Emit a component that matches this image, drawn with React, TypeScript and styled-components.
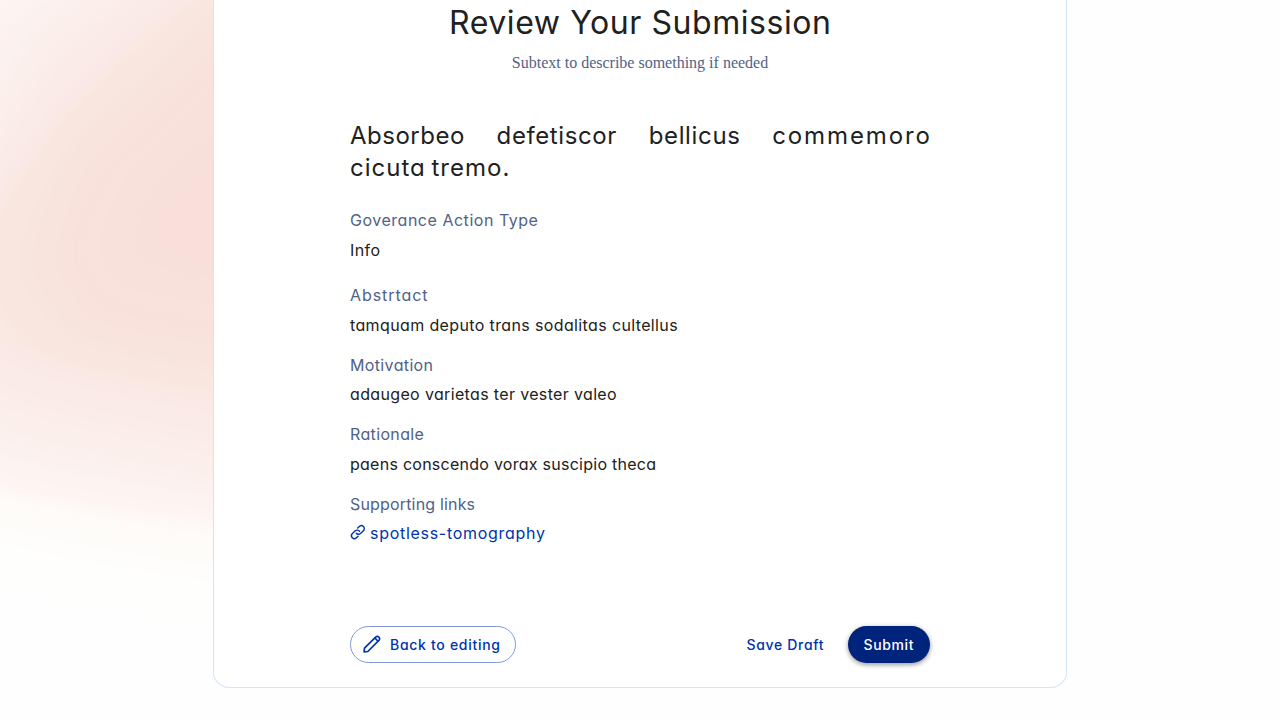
import React from "react";
import styled, { createGlobalStyle } from "styled-components";

const GlobalStyle = createGlobalStyle`
  *, *::before, *::after { box-sizing: border-box; }
  body { margin: 0; background: #fff; }
`;

const sans = `Inter, "Open Sans", sans-serif`;

const Page = styled.main`
  position: relative;
  height: 720px;
  overflow: hidden;
  display: flex;
  justify-content: center;
  align-items: flex-start;
  background: #fefefe;
  font-family: ${sans};
  font-feature-settings: "cv11";
`;

const Glow = styled.svg`
  position: absolute;
  left: 0;
  top: 0;
`;

const Card = styled.section`
  position: relative;
  width: 854px;
  height: 688px;
  padding: 0 136px;
  display: flex;
  flex-direction: column;
  background: #fff;
  border: 1px solid #d6e2ff;
  border-top: 0;
  border-radius: 0 0 16px 16px;
`;

const Spaced = styled.span<{ $ls: number }>`
  letter-spacing: ${(p) => p.$ls}px;
  margin-right: ${(p) => -p.$ls}px;
`;

const Title = styled.h1`
  margin: 0;
  padding-top: 1px;
  font-size: 32px;
  font-weight: 400;
  line-height: 44px;
  text-align: center;
  color: #212121;
`;

const Subtitle = styled.p`
  margin: 6px 0 0;
  font-family: "Liberation Serif", serif;
  font-size: 16px;
  line-height: 24px;
  text-align: center;
  color: #506288;
`;

const Heading = styled.h2`
  margin: 45px 0 0;
  font-size: 24px;
  font-weight: 400;
  line-height: 32px;
  text-align: justify;
  color: #212121;
`;

const Fields = styled.dl`
  margin: 24px 0 0;
  display: flex;
  flex-direction: column;
  gap: 16px;
`;

const Field = styled.div<{ $after?: number }>`
  display: flex;
  flex-direction: column;
  gap: 5.5px;
  margin-bottom: ${(p) => p.$after ?? 0}px;
  font-size: 16px;
  line-height: 24px;
`;

const Label = styled.dt`
  color: #506288;
`;

const Value = styled.dd`
  margin: 0;
  color: #212121;
`;

const Link = styled.a`
  display: flex;
  align-items: center;
  gap: 4px;
  color: #0033ad;
  svg { margin-top: -3px; }
`;

const Actions = styled.footer`
  display: flex;
  align-items: center;
  margin-top: auto;
  margin-bottom: 24px;
`;

const Button = styled.button<{ $kind: "outlined" | "text" | "contained" }>`
  display: flex;
  align-items: center;
  justify-content: center;
  height: 37px;
  padding: ${(p) => (p.$kind === "outlined" ? "0 3px 1px 0" : "0 1px 1px 0")};
  width: ${(p) => ({ outlined: 166, text: 93, contained: 82 })[p.$kind]}px;
  margin-left: ${(p) => ({ outlined: "0", text: "auto", contained: "16px" })[p.$kind]};
  border: ${(p) => (p.$kind === "outlined" ? "1px solid #8099d6" : "0")};
  border-radius: 100px;
  background: ${(p) => (p.$kind === "contained" ? "#00247b" : "transparent")};
  color: ${(p) => (p.$kind === "contained" ? "#fff" : "#0033ad")};
  box-shadow: ${(p) =>
    p.$kind === "contained"
      ? "0 2px 4px rgba(0,0,0,.28), 0 1px 6px rgba(0,0,0,.16)"
      : "none"};
  font-family: ${sans};
  font-feature-settings: "cv11";
  font-size: 14px;
  font-weight: 500;
  svg { margin-right: 9px; }
`;

/* Outlines of the glow from its faint rim to its core: seven points each,
   from the upper right edge, round the left, to the lower right edge. */
type Level = { color: number[]; pts: number[][] };
const levels: Level[] = [
  { color: [254, 254, 254], pts: [[240, -210], [60, -150], [-150, 20], [-250, 260], [-180, 560], [0, 643], [240, 674]] },
  { color: [254, 254, 253], pts: [[240, -170], [50, -110], [-120, 40], [-190, 260], [-140, 490], [0, 557], [240, 602]] },
  { color: [254, 250, 247], pts: [[240, -130], [40, -80], [-100, 50], [-150, 260], [-110, 440], [0, 497], [240, 540]] },
  { color: [254, 245, 243], pts: [[240, -120], [10, -8], [-90, 90], [-130, 260], [-100, 410], [0, 483], [240, 522]] },
  { color: [251, 240, 237], pts: [[240, -90], [67, 0], [0, 80], [-90, 260], [-70, 390], [0, 440], [240, 492]] },
  { color: [250, 232, 230], pts: [[240, -48], [115, 54], [40, 136], [-30, 250], [-14, 322], [50, 367], [240, 408]] },
  { color: [249, 231, 223], pts: [[240, -34], [123, 65], [48, 144], [-10, 250], [8, 316], [60, 358], [240, 396]] },
  { color: [248, 228, 221], pts: [[240, 0], [135, 97], [75, 156], [40, 250], [52, 293], [100, 337], [240, 366]] },
  { color: [249, 224, 220], pts: [[240, 44], [147, 132], [103, 174], [75, 240], [84, 280], [120, 312], [240, 333]] },
  { color: [248, 226, 219], pts: [[240, 54], [154, 138], [112, 178], [87, 240], [96, 276], [130, 302], [240, 322]] },
  { color: [247, 225, 218], pts: [[240, 70], [164, 148], [124, 192], [109, 240], [118, 270], [150, 286], [240, 299]] },
  { color: [247, 224, 218], pts: [[240, 134], [190, 178], [165, 203], [153, 232], [164, 249], [185, 261], [240, 267]] },
  { color: [250, 222, 218], pts: [[240, 144], [194, 184], [171, 208], [160, 231], [170, 246], [190, 257], [240, 262]] },
];

const outline = (pts: number[][]) => {
  let d = `M${pts[0].join(",")}`;
  for (let i = 0; i < pts.length - 1; i++) {
    const a = pts[Math.max(i - 1, 0)];
    const b = pts[i];
    const c = pts[i + 1];
    const e = pts[Math.min(i + 2, pts.length - 1)];
    d += `C${b[0] + (c[0] - a[0]) / 6},${b[1] + (c[1] - a[1]) / 6} ${c[0] - (e[0] - b[0]) / 6},${c[1] - (e[1] - b[1]) / 6} ${c.join(",")}`;
  }
  return d + "Z";
};

const mix = (a: number[], b: number[], t: number) => a.map((v, i) => v + (b[i] - v) * t);

const bands = levels.slice(0, -1).flatMap((from, i) => {
  const to = levels[i + 1];
  return Array.from({ length: 8 }, (_, k) => ({
    d: outline(from.pts.map((p, j) => mix(p, to.pts[j], k / 8))),
    fill: `rgb(${mix(from.color, to.color, k / 8).map(Math.round).join(",")})`,
  }));
});
const core = levels[levels.length - 1];
bands.push({ d: outline(core.pts), fill: `rgb(${core.color.join(",")})` });

const BackgroundGlow = () => (
  <Glow width="240" height="720" viewBox="0 0 240 720" aria-hidden="true">
    {bands.map((b, i) => (
      <path key={i} d={b.d} fill={b.fill} />
    ))}
  </Glow>
);

const LinkIcon = () => (
  <svg width="16" height="16" viewBox="0 0 16 16" fill="none" stroke="#0033ad" strokeWidth="1.4" strokeLinecap="round" strokeLinejoin="round">
    <path d="M6.3 9.2a2.9 2.9 0 0 0 4.2.2l2.9-2.7a2.9 2.9 0 0 0 .1-4.1 2.9 2.9 0 0 0-4.1-.1L7.7 4.1" />
    <path d="M9.5 7.2a2.9 2.9 0 0 0-4.2-.4L2.4 9.6a2.9 2.9 0 0 0-.1 4.1 2.9 2.9 0 0 0 4.1.1l1.7-1.6" />
  </svg>
);

const PencilIcon = () => (
  <svg width="18" height="18" viewBox="0 0 18 18" fill="none" stroke="#0033ad" strokeWidth="1.7" strokeLinecap="round" strokeLinejoin="round">
    <path d="M1.1 16.9l.4-3.7L12.9 1.9a1.8 1.8 0 0 1 2.6 0l.6.6a1.8 1.8 0 0 1 0 2.6L4.8 16.5z" />
    <path d="M12 3.2l2.8 2.8" />
  </svg>
);

const heading: [string, number][] = [
  ["Absorbeo", 0.5],
  ["defetiscor", 0.6],
  ["bellicus", 0.65],
  ["commemoro", 1.9],
  ["cicuta", 1],
  ["tremo.", 1],
];

type Entry = { label: string; labelLs: number; value: string; valueLs: number; after?: number };
const entries: Entry[] = [
  { label: "Goverance Action Type", labelLs: 0.52, value: "Info", valueLs: 0.4, after: 5.5 },
  { label: "Abstrtact", labelLs: 0.93, value: "tamquam deputo trans sodalitas cultellus", valueLs: 0.37 },
  { label: "Motivation", labelLs: 0.36, value: "adaugeo varietas ter vester valeo", valueLs: 0.35 },
  { label: "Rationale", labelLs: 0.36, value: "paens conscendo vorax suscipio theca", valueLs: 0.26 },
];

export default function App() {
  return (
    <>
      <GlobalStyle />
      <Page>
        <BackgroundGlow />
        <Card>
          <Title><Spaced $ls={0.57}>Review Your Submission</Spaced></Title>
          <Subtitle>Subtext to describe something if needed</Subtitle>
          <Heading>
            {heading.map(([word, ls]) => (
              <React.Fragment key={word}>
                <Spaced $ls={ls}>{word}</Spaced>{" "}
              </React.Fragment>
            ))}
          </Heading>
          <Fields>
            {entries.map((e) => (
              <Field key={e.label} $after={e.after}>
                <Label><Spaced $ls={e.labelLs}>{e.label}</Spaced></Label>
                <Value><Spaced $ls={e.valueLs}>{e.value}</Spaced></Value>
              </Field>
            ))}
            <Field>
              <Label><Spaced $ls={0.17}>Supporting links</Spaced></Label>
              <Value>
                <Link>
                  <LinkIcon />
                  <Spaced $ls={0.71}>spotless-tomography</Spaced>
                </Link>
              </Value>
            </Field>
          </Fields>
          <Actions>
            <Button $kind="outlined"><PencilIcon /><Spaced $ls={0.7}>Back to editing</Spaced></Button>
            <Button $kind="text"><Spaced $ls={0.68}>Save Draft</Spaced></Button>
            <Button $kind="contained"><Spaced $ls={0.65}>Submit</Spaced></Button>
          </Actions>
        </Card>
      </Page>
    </>
  );
}
